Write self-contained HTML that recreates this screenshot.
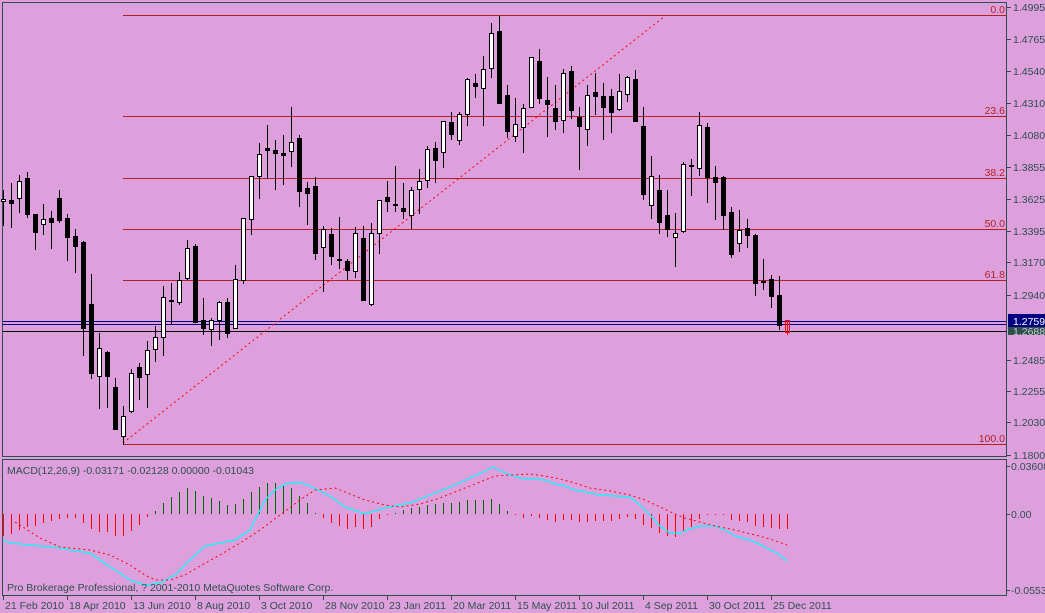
<!DOCTYPE html>
<html><head><meta charset="utf-8"><style>
html,body{margin:0;padding:0;background:#DDA0DD;width:1045px;height:613px;overflow:hidden}
svg{display:block}
text{font-family:"Liberation Sans",sans-serif;font-size:10.5px;fill:#2f4f4f}
</style></head><body>
<svg id="s" width="1045" height="613" xmlns="http://www.w3.org/2000/svg" shape-rendering="crispEdges">
<rect width="1045" height="613" fill="#DDA0DD"/>
<g id="bg"></g>
<rect x="2.5" y="2.5" width="1004" height="454" fill="none" stroke="#2f4f4f"/>
<rect x="2.5" y="459.5" width="1004" height="136" fill="none" stroke="#2f4f4f"/>
<g id="g"></g>
<g id="t"></g>
<text x="7" y="474">MACD(12,26,9) -0.03171 -0.02128 0.00000 -0.01043</text>
<text x="7" y="591">Pro Brokerage Professional, ? 2001-2010 MetaQuotes Software Corp.</text>
</svg>
<script>
var NS="http://www.w3.org/2000/svg",G=document.getElementById('g'),T=document.getElementById('t');
function el(p,n,a,txt){var e=document.createElementNS(NS,n);for(var k in a)e.setAttribute(k,a[k]);if(txt)e.textContent=txt;p.appendChild(e);return e;}
// fib lines
[[15,"0.0"],[116,"23.6"],[178,"38.2"],[229,"50.0"],[280,"61.8"],[444,"100.0"]].forEach(function(f){
 el(G,'line',{x1:123,x2:1006,y1:f[0]+.5,y2:f[0]+.5,stroke:'#b22222'});
 el(T,'text',{x:1005,y:f[0]-2,'text-anchor':'end',style:'fill:#b22222'},f[1]);
});
el(G,'line',{x1:3,x2:1006,y1:321.5,y2:321.5,stroke:'#000080'});
el(G,'line',{x1:3,x2:1006,y1:324.5,y2:324.5,stroke:'#000080'});
el(G,'line',{x1:3,x2:1006,y1:331.5,y2:331.5,stroke:'#000'});
el(G,'line',{x1:123,y1:443,x2:665,y2:16,stroke:'#ff0000','stroke-dasharray':'2,3',"shape-rendering":"auto"});
// candles: open/close top,bottom, wick hi,lo, color w/b
var C=[[199,201,190,225,'w'],[200,203,183,227,'b'],[181,198,175,212,'w'],[178,214,172,217,'b'],[214,232,214,249,'b'],[219,224,204,234,'w'],[218,222,211,248,'b'],[198,220,190,222,'b'],[218,237,214,260,'b'],[236,246,229,272,'b'],
[242,328,241,355,'b'],[304,373,274,378,'b'],[348,376,333,408,'w'],[352,376,351,407,'b'],[387,429,378,429,'b'],[416,436,406,444,'w'],[373,411,369,412,'w'],[367,377,363,399,'b'],[350,374,341,407,'w'],[337,349,326,361,'w'],
[297,337,286,355,'w'],[300,301,283,324,'b'],[280,302,272,304,'w'],[248,278,240,279,'w'],[246,322,244,322,'b'],[320,328,298,334,'b'],[320,329,318,345,'w'],[302,320,301,339,'w'],[302,333,298,337,'b'],[279,328,265,328,'w'],
[218,280,218,283,'w'],[176,219,176,234,'w'],[154,176,143,198,'w'],[148,150,125,178,'b'],[150,153,140,189,'b'],[153,155,135,184,'b'],[142,151,107,166,'w'],[138,191,135,206,'b'],[188,193,182,224,'b'],[186,253,177,259,'b'],
[229,247,226,291,'w'],[234,256,228,264,'b'],[259,260,217,268,'b'],[261,270,259,279,'b'],[233,271,227,277,'w'],[238,300,226,300,'b'],[233,304,223,305,'w'],[200,233,200,253,'w'],[197,201,181,211,'b'],[204,205,166,211,'b'],
[208,211,183,218,'b'],[190,215,187,228,'w'],[181,189,169,213,'w'],[149,180,146,187,'w'],[148,160,142,182,'b'],[121,152,121,167,'w'],[122,134,112,139,'b'],[114,140,112,144,'w'],[79,114,78,125,'w'],[83,86,74,97,'b'],
[69,88,56,125,'w'],[33,68,23,77,'w'],[31,103,16,103,'b'],[95,131,85,137,'b'],[124,136,98,141,'w'],[108,127,104,152,'w'],[57,107,57,107,'w'],[61,98,49,103,'b'],[100,104,77,136,'b'],[108,121,85,129,'b'],
[73,120,69,132,'w'],[71,110,66,118,'b'],[117,126,107,169,'b'],[95,129,85,145,'w'],[92,96,73,114,'b'],[96,107,83,139,'b'],[96,112,89,132,'b'],[91,109,74,110,'w'],[77,94,76,101,'w'],[79,121,70,121,'b'],
[126,194,107,199,'b'],[176,205,156,218,'w'],[190,222,175,233,'b'],[215,229,190,236,'b'],[233,237,213,266,'w'],[164,231,162,232,'w'],[165,166,159,195,'b'],[125,168,112,175,'w'],[127,177,123,202,'b'],[177,182,166,219,'b'],
[177,215,176,229,'b'],[212,254,207,257,'b'],[230,243,210,251,'w'],[228,235,219,247,'b'],[235,283,234,295,'b'],[281,282,259,289,'w'],[279,296,275,307,'b'],[295,325,276,329,'b'],[320,332,320,334,'r']];
C.forEach(function(c,i){var x=3+8*i;
 var col=c[4]=='r'?'#ff0000':'#000';
 el(G,'line',{x1:x+.5,x2:x+.5,y1:c[2],y2:c[3]+1,stroke:col});
 if(c[4]=='b')el(G,'rect',{x:x-2,y:c[0],width:5,height:Math.max(1,c[1]-c[0]+1),fill:'#000'});
 else if(c[4]=='w')el(G,'rect',{x:x-1.5,y:c[0]+.5,width:4,height:Math.max(1,c[1]-c[0]),fill:'#fff',stroke:'#000'});
 else el(G,'rect',{x:x-1.5,y:c[0]+.5,width:4,height:c[1]-c[0],fill:'none',stroke:col});
});
// price axis
[[7,"1.4995"],[39,"1.4765"],[71,"1.4540"],[103,"1.4310"],[135,"1.4080"],[167,"1.3855"],[199,"1.3625"],[231,"1.3395"],[262,"1.3170"],[295,"1.2940"],[360,"1.2485"],[391,"1.2255"],[422,"1.2030"],[455,"1.1800"]].forEach(function(p){
 el(G,'line',{x1:1007,x2:1011,y1:p[0]+.5,y2:p[0]+.5,stroke:'#2f4f4f'});
 el(T,'text',{x:1013,y:p[0]+4},p[1]);
});
el(G,'rect',{x:1008,y:314,width:37,height:13,fill:'#000080'});
el(G,'rect',{x:1008,y:327,width:37,height:8,fill:'#2f4f4f'});
el(T,'text',{x:1013,y:325,style:'fill:#fff'},"1.2759");
el(T,'text',{x:1013,y:335,style:'fill:#ccc'},"1.2688");
[[466,"0.03608"],[514,"0.00"],[590,"-0.05538"]].forEach(function(p){
 el(G,'line',{x1:1007,x2:1010,y1:p[0]+.5,y2:p[0]+.5,stroke:'#2f4f4f'});
 el(T,'text',{x:1011,y:p[0]+4},p[1]);
});
// histogram
var H=[-22,-20,-16,-13,-12,-9,-7,-5,-4,-4,-9,-15,-18,-18,-22,-22,-17,-11,-3,3,11,17,22,26,23,18,16,13,9,10,15,22,27,31,31,28,26,18,11,1,-4,-9,-12,-15,-13,-15,-13,-5,-1,1,
4,6,7,9,10,11,11,12,14,14,14,15,10,3,-1,-4,-2,-4,-6,-8,-6,-6,-8,-8,-7,-7,-7,-5,-3,-5,-11,-14,-19,-22,-23,-18,-13,-5,-1,-1,-1,-6,-7,-8,-12,-13,-14,-15,-15];
H.forEach(function(h,i){var x=3+8*i+.5;
 el(G,'line',{x1:x,x2:x,y1:514,y2:514-h,stroke:h>0?'#006400':'#ff0000'});});
var cy=[[3,540],[10,543],[30,545],[60,548],[70,550],[90,553],[100,560],[115,570],[130,580],[145,585],[160,583],[175,575],[190,560],[205,546],[225,542],[235,540],[250,530],[265,500],[275,490],[285,484],[298,482],[310,486],[330,496],[345,507],[365,514],[385,508],[400,505],[410,503],[425,497],[440,491],[455,485],[470,478],[485,471],[493,467],[505,473],[520,478],[530,479],[545,480],[555,484],[565,486],[575,490],[585,492],[600,495],[615,496],[630,497],[640,505],[650,515],[660,526],[670,533],[680,533],[690,529],[700,526],[715,526],[725,530],[735,536],[750,540],[765,547],[780,555],[787,561]];
var rd=[[15,522],[40,538],[60,547],[90,550],[110,555],[130,565],[145,575],[155,580],[170,580],[185,575],[200,566],[220,555],[240,543],[260,530],[280,515],[300,500],[315,490],[335,488],[350,494],[365,500],[385,505],[400,507],[420,504],[440,498],[460,490],[480,482],[495,476],[510,475],[530,474],[545,476],[560,479],[575,483],[590,488],[610,491],[630,495],[645,500],[660,507],[675,514],[685,518],[700,522],[715,526],[735,530],[755,535],[770,539],[787,545]];
function pts(a){return a.map(function(p){return p.join(',')}).join(' ')}
el(G,'polyline',{points:pts(cy),fill:'none',stroke:'#00ffff','stroke-width':1.2,'shape-rendering':'auto'});
el(G,'polyline',{points:pts(rd),fill:'none',stroke:'#ff0000','stroke-dasharray':'2,3','shape-rendering':'auto'});
// dates
["21 Feb 2010","18 Apr 2010","13 Jun 2010","8 Aug 2010","3 Oct 2010","28 Nov 2010","23 Jan 2011","20 Mar 2011","15 May 2011","10 Jul 2011","4 Sep 2011","30 Oct 2011","25 Dec 2011"].forEach(function(d,i){
 var x=3+64*i;
 el(G,'line',{x1:x+.5,x2:x+.5,y1:596,y2:600,stroke:'#2f4f4f'});
 el(T,'text',{x:x+2,y:609},d);
});
</script>
</body></html>
